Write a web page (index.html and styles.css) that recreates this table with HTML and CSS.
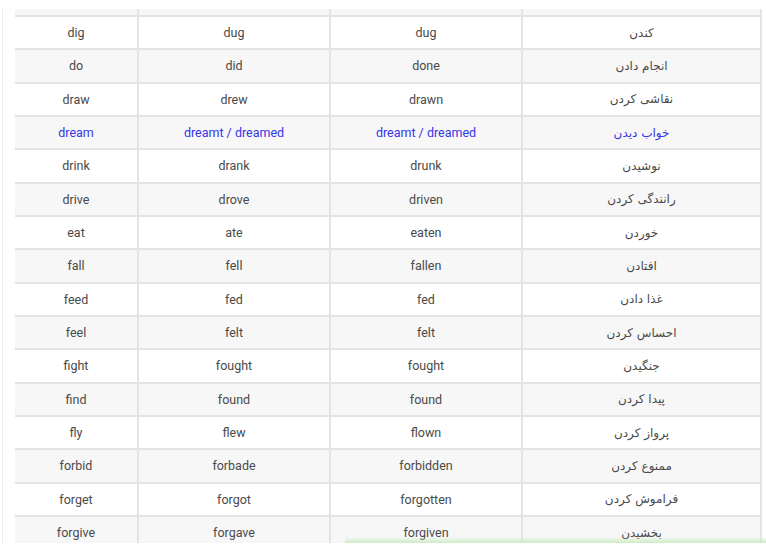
FILE: index.html
```html
<!DOCTYPE html>
<html lang="fa">
<head>
<meta charset="utf-8">
<link rel="stylesheet" href="styles.css">
</head>
<body>
<div class="page">
  <div class="frame">
    <div class="table">
      <div class="row alt partial"><div class="c"></div><div class="c"></div><div class="c"></div><div class="c fa"></div></div>
      <div class="row"><div class="c">dig</div><div class="c">dug</div><div class="c">dug</div><div class="c fa">کندن</div></div>
      <div class="row alt"><div class="c">do</div><div class="c">did</div><div class="c">done</div><div class="c fa">انجام دادن</div></div>
      <div class="row"><div class="c">draw</div><div class="c">drew</div><div class="c">drawn</div><div class="c fa">نقاشی کردن</div></div>
      <div class="row alt blue"><div class="c">dream</div><div class="c">dreamt / dreamed</div><div class="c">dreamt / dreamed</div><div class="c fa">خواب دیدن</div></div>
      <div class="row"><div class="c">drink</div><div class="c">drank</div><div class="c">drunk</div><div class="c fa">نوشیدن</div></div>
      <div class="row alt"><div class="c">drive</div><div class="c">drove</div><div class="c">driven</div><div class="c fa">رانندگی کردن</div></div>
      <div class="row"><div class="c">eat</div><div class="c">ate</div><div class="c">eaten</div><div class="c fa">خوردن</div></div>
      <div class="row alt"><div class="c">fall</div><div class="c">fell</div><div class="c">fallen</div><div class="c fa">افتادن</div></div>
      <div class="row"><div class="c">feed</div><div class="c">fed</div><div class="c">fed</div><div class="c fa">غذا دادن</div></div>
      <div class="row alt"><div class="c">feel</div><div class="c">felt</div><div class="c">felt</div><div class="c fa">احساس کردن</div></div>
      <div class="row"><div class="c">fight</div><div class="c">fought</div><div class="c">fought</div><div class="c fa">جنگیدن</div></div>
      <div class="row alt"><div class="c">find</div><div class="c">found</div><div class="c">found</div><div class="c fa">پیدا کردن</div></div>
      <div class="row"><div class="c">fly</div><div class="c">flew</div><div class="c">flown</div><div class="c fa">پرواز کردن</div></div>
      <div class="row alt"><div class="c">forbid</div><div class="c">forbade</div><div class="c">forbidden</div><div class="c fa">ممنوع کردن</div></div>
      <div class="row"><div class="c">forget</div><div class="c">forgot</div><div class="c">forgotten</div><div class="c fa">فراموش کردن</div></div>
      <div class="row alt"><div class="c">forgive</div><div class="c">forgave</div><div class="c">forgiven</div><div class="c fa">بخشیدن</div></div>
    </div>
  </div>
  <div class="glow"></div>
</div>
</body>
</html>
```

FILE: styles.css
```css
html, body {
  margin: 0;
  padding: 0;
  background: #ffffff;
}

.page {
  position: relative;
  width: 766px;
  height: 552px;
  overflow: hidden;
}

.frame {
  margin-top: 9px;
  margin-left: 2px;
  height: 534px;
  overflow: hidden;
  border-left: 1px solid #ececec;
  padding-left: 12px;
}

.table {
  width: 747px;
  display: flex;
  flex-direction: column;
  font-family: Roboto, "Liberation Sans", sans-serif;
  font-size: 12.5px;
  color: #4a4a4a;
}

.row {
  display: grid;
  grid-template-columns: 124px 192px 192px 239px;
  height: 33.333px;
  flex: none;
  box-sizing: border-box;
  border-bottom: 2px solid #e4e4e4;
  background: #ffffff;
}

.row.alt {
  background: #f7f7f7;
}

.row.partial {
  height: 8px;
}

.c {
  display: flex;
  align-items: center;
  justify-content: center;
  border-right: 2px solid #e4e4e4;
}

.fa {
  direction: rtl;
  font-family: "DejaVu Sans", sans-serif;
  font-size: 12px;
}

.blue {
  color: #3535e8;
}

.glow {
  position: absolute;
  left: 345px;
  right: 0;
  top: 537px;
  height: 6px;
  background: linear-gradient(to bottom, rgba(220, 240, 215, 0), rgba(200, 235, 190, 0.9));
}
```
